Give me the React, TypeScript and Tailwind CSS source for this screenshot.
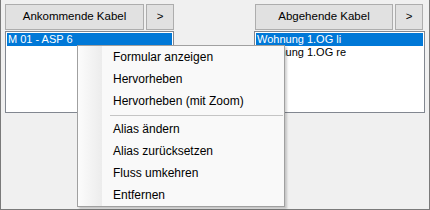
import React from 'react';

const font = { fontFamily: '"Liberation Sans", Arial, sans-serif' };

interface CableListProps {
  title: string;
  items: string[];
  buttonWidth: string;
  listWidth: string;
  inset: string;
}

function CableList({ title, items, buttonWidth, listWidth, inset }: CableListProps) {
  return (
    <div className={`flex flex-col gap-[1px] ${listWidth}`}>
      <div className={`flex gap-[2px] ${inset}`}>
        <button className={`h-[26px] ${buttonWidth} bg-[#e1e1e1] border border-[#adadad] text-[11.5px] text-black`}>
          {title}
        </button>
        <button className="h-[26px] flex-1 bg-[#e1e1e1] border border-[#adadad] text-[11.5px] text-black">&gt;</button>
      </div>
      <div className="h-[82px] bg-white border border-[#828790] p-[1px] text-[11px] leading-[13px]">
        {items.map((item, i) => (
          <div key={item} className={`h-[13px] pl-[1px] whitespace-nowrap ${i === 0 ? 'bg-[#0078d7] text-white' : 'text-black'}`}>
            {item}
          </div>
        ))}
      </div>
    </div>
  );
}

const menuGroups = [
  ['Formular anzeigen', 'Hervorheben', 'Hervorheben (mit Zoom)'],
  ['Alias ändern', 'Alias zurücksetzen', 'Fluss umkehren', 'Entfernen'],
];

function ContextMenu() {
  return (
    <div className="absolute left-[76px] top-[45px] w-[208px] bg-[#f9f9f9] border border-[#a0a0a0] shadow-[2px_2px_2px_rgba(0,0,0,0.18)] flex">
      <div className="w-[24px] bg-gradient-to-r from-[#fcfcfc] to-[#ececec]" />
      <div className="flex-1 flex flex-col">
        {menuGroups.map((group, g) => (
          <React.Fragment key={g}>
            {g > 0 && (
              <div className="h-[6px] flex items-center pl-[8px] pr-[1px]">
                <div className="h-[1px] w-full bg-[#c5c5c5]" />
              </div>
            )}
            {group.map((label) => (
              <div key={label} className="h-[22px] flex items-center pl-[11px] text-[12px] text-black whitespace-nowrap">
                {label}
              </div>
            ))}
          </React.Fragment>
        ))}
      </div>
    </div>
  );
}

export default function App() {
  return (
    <div style={font} className="relative w-[430px] h-[210px] bg-[#f0f0f0] border-l border-r border-b border-[#7a7a7a] pl-[4px] pt-[4px] flex gap-[80px]">
      <CableList
        title="Ankommende Kabel"
        items={['M 01 - ASP 6']}
        buttonWidth="w-[139px]"
        listWidth="w-[169px]"
        inset=""
      />
      <CableList
        title="Abgehende Kabel"
        items={['Wohnung 1.OG li', 'Wohnung 1.OG re']}
        buttonWidth="w-[138px]"
        listWidth="w-[171px]"
        inset="pl-[1px] pr-[2px]"
      />
      <ContextMenu />
    </div>
  );
}
